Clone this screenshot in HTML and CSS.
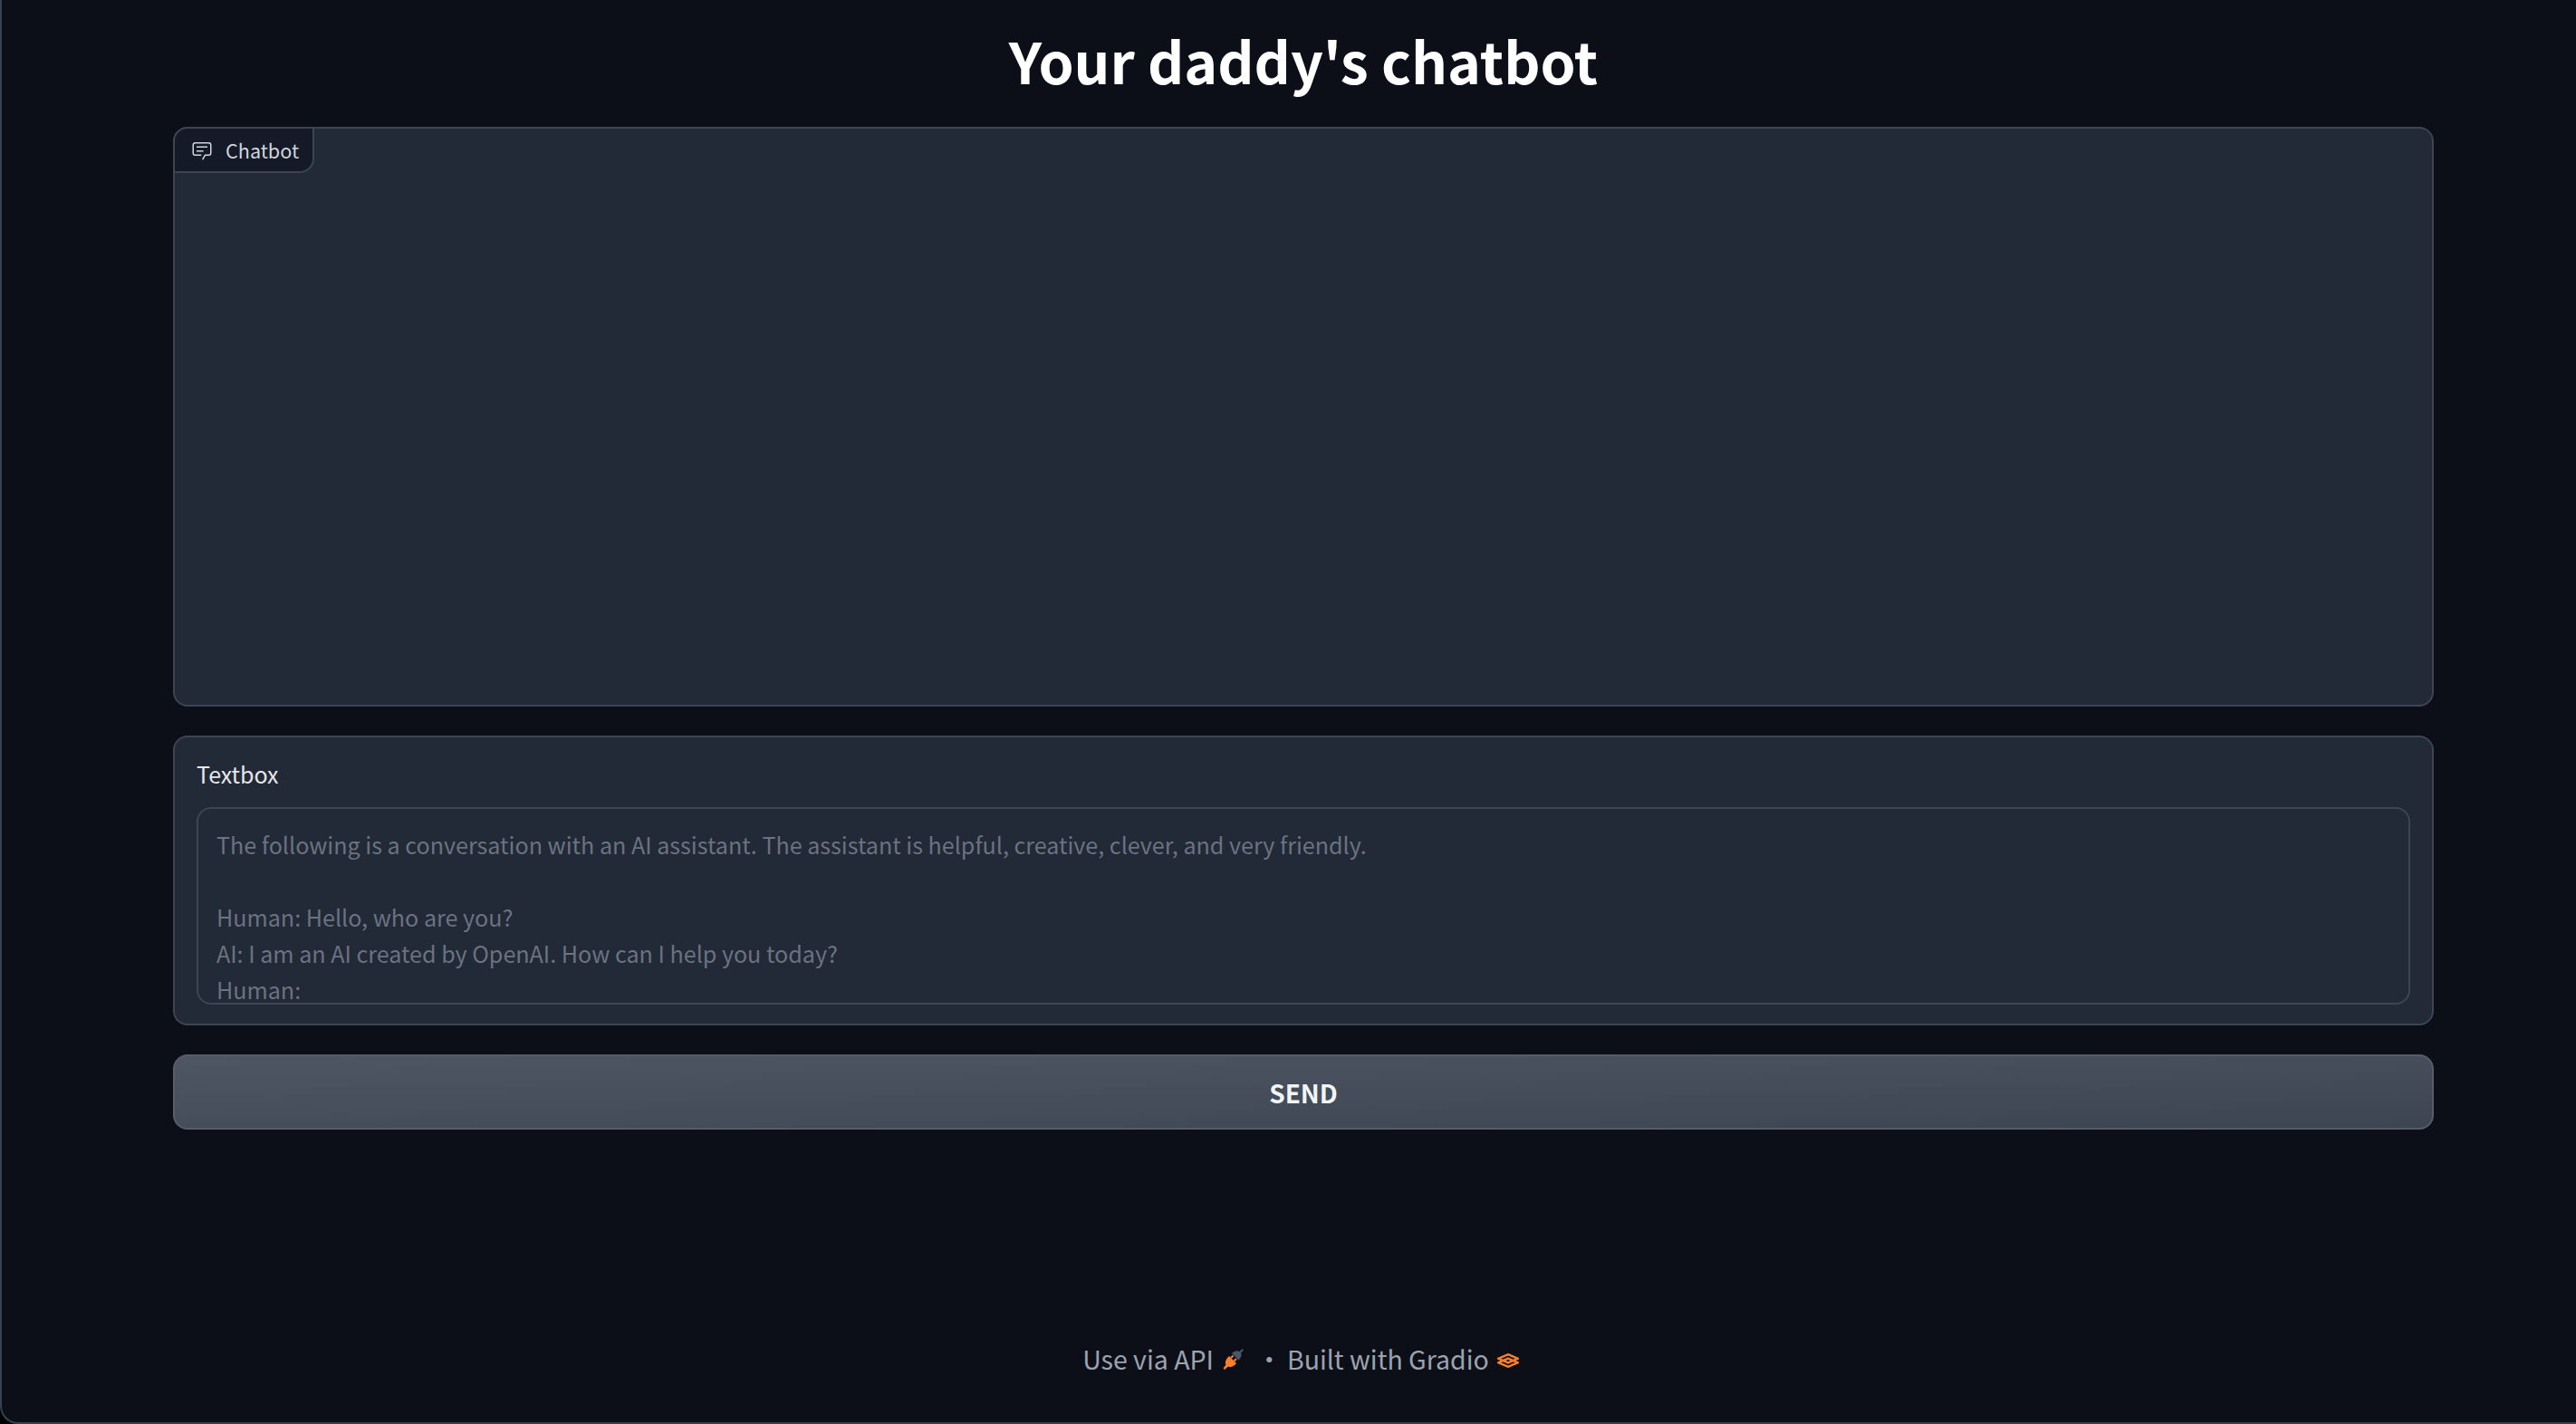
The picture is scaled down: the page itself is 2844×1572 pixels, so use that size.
FILE: index.html
```html
<!DOCTYPE html>
<html lang="en">
<head>
<meta charset="utf-8">
<title>Your daddy's chatbot</title>
<link rel="stylesheet" href="styles.css">
</head>
<body>
<div class="frame">
  <main class="app">
    <h1 class="title">Your daddy's chatbot</h1>
    <section class="chatbot">
      <div class="tab">
        <svg class="tab-icon" viewBox="0 0 32 32" aria-hidden="true"><path fill="currentColor" d="M17.74 30L16 29l4-7h6a2 2 0 0 0 2-2V8a2 2 0 0 0-2-2H6a2 2 0 0 0-2 2v12a2 2 0 0 0 2 2h9v2H6a4 4 0 0 1-4-4V8a4 4 0 0 1 4-4h20a4 4 0 0 1 4 4v12a4 4 0 0 1-4 4h-4.84z"/><path fill="currentColor" d="M8 10h16v2H8zM8 16h10v2H8z"/></svg>
        <span>Chatbot</span>
      </div>
    </section>
    <section class="textbox">
      <label class="field-label" for="prompt">Textbox</label>
      <textarea class="field" id="prompt" readonly>The following is a conversation with an AI assistant. The assistant is helpful, creative, clever, and very friendly.

Human: Hello, who are you?
AI: I am an AI created by OpenAI. How can I help you today?
Human:</textarea>
    </section>
    <button class="send" type="button">SEND</button>
  </main>
  <footer class="footer">
    <a class="foot-link">Use via API
      <svg class="plug" viewBox="0 0 23 23" aria-hidden="true">
        <path fill="#4b5563" d="M10 5C12.500 2.500 16 1.500 18.500 3L21.500 0 23 1.500 20 4.500C21.500 7 20 10 17.500 12.500Z"/>
        <path fill="none" stroke="#f97f2a" stroke-width="2" d="M9 10L11.500 7.500M12.500 13.500L15 11"/>
        <path fill="#f97f2a" d="M7 8L15 16C13 19 9 21 6 19.500L2 23 .5 21.500 3.500 17.500C2 15 3.500 11 7 8Z"/>
      </svg>
    </a>
    <span class="dot">·</span>
    <a class="foot-link">Built with Gradio
      <svg class="logo" viewBox="0 0 24 16" aria-hidden="true">
        <path fill="none" stroke="#f97f2a" stroke-width="2.400" d="M12 1.200L22.800 5.800 12 10.400 1.200 5.800Z"/>
        <path fill="none" stroke="#f97f2a" stroke-width="2.400" d="M12 5.600L22.800 10.200 12 14.800 1.200 10.200Z"/>
      </svg>
    </a>
  </footer>
</div>
</body>
</html>
```

FILE: styles.css
```css
* { box-sizing: border-box; }
html, body { margin: 0; height: 100%; }
body {
  background: #000;
  font-family: "Noto Sans CJK SC", "Noto Sans", sans-serif;
}
.frame {
  height: 1572px;
  display: flex;
  flex-direction: column;
  align-items: center;
  padding-left: 32px;
  background: #0c0f18;
  border: 2px solid #374151;
  border-top: 0;
  border-right: 0;
  border-radius: 0 0 0 20px;
}
.app {
  width: 2496px;
  display: flex;
  flex-direction: column;
  gap: 32px;
}
.title {
  margin: 0 0 -32px;
  height: 140px;
  padding-top: 24px;
  font-size: 62.6px;
  line-height: 84px;
  font-weight: 600;
  color: #fff;
  text-align: center;
}
.chatbot {
  height: 640px;
  background: #222937;
  border: 2px solid #3d4554;
  border-radius: 16px;
}
.tab {
  width: 156px;
  height: 51px;
  margin: -2px 0 0 -2px;
  display: flex;
  align-items: center;
  gap: 14px;
  padding-left: 18px;
  background: #141a27;
  border: 2px solid #3d4554;
  border-radius: 16px 0 16px 0;
  color: #d1d5db;
  font-size: 21.6px;
}
.tab-icon { width: 24px; height: 24px; flex: none; }
.textbox {
  height: 320px;
  display: flex;
  flex-direction: column;
  padding: 24px 24px 21px;
  background: #222937;
  border: 2px solid #3d4554;
  border-radius: 16px;
}
.field-label {
  height: 53px;
  font-size: 25px;
  line-height: 32px;
  color: #e5e7eb;
}
.field {
  flex: 1;
  display: block;
  width: 100%;
  padding: 19px 20px;
  margin: 0;
  background: #222937;
  border: 2px solid #3d4554;
  border-radius: 16px;
  color: #6b7280;
  font: 25.1px/40px "Noto Sans CJK SC", "Noto Sans", sans-serif;
  resize: none;
  overflow: hidden;
  outline: none;
}
.send {
  height: 83px;
  background: linear-gradient(to bottom right, #4e5663, #3d4553);
  border: 2px solid #555d6a;
  border-radius: 16px;
  color: #f3f4f6;
  font: 600 28px "Noto Sans CJK SC", "Noto Sans", sans-serif;
}
.footer {
  margin-top: auto;
  margin-bottom: 46px;
  padding-right: 6px;
  display: flex;
  align-items: center;
  font-size: 28.5px;
  line-height: 48px;
  color: #9ca3af;
}
.foot-link { display: flex; align-items: center; gap: 10px; }
.foot-link + .dot + .foot-link { gap: 9px; }
.dot { width: 12px; margin: 0 22px 0 14px; text-align: center; }
.plug { width: 23px; height: 23px; }
.logo { width: 24px; height: 16px; margin-top: 3px; }
```
